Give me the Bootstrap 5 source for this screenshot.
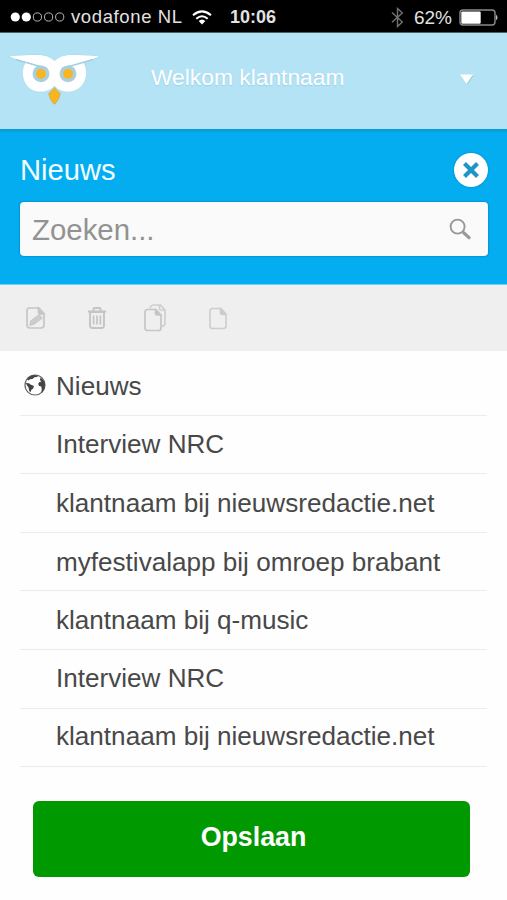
<!DOCTYPE html>
<html lang="nl">
<head>
<meta charset="utf-8">
<meta name="viewport" content="width=device-width, initial-scale=1">
<title>Nieuws</title>
<link href="https://cdn.jsdelivr.net/npm/bootstrap@5.3.0/dist/css/bootstrap.min.css" rel="stylesheet">
<style>
  body { font-family: "Liberation Sans", Arial, sans-serif; background: #fefefe; color: #484848; line-height: 1; overflow: hidden; }
  svg { display: block; flex: none; }
  .phone-status { height: 33px; background: #000; color: #e2e2e2; font-size: 18.5px; padding: 2px 9px 0 10px; border-bottom: 1px solid #4b6068; }
  .carrier { letter-spacing: .62px; margin-left: 6px; width: 121px; white-space: nowrap; padding-top: 1px; }
  .clock { font-size: 18px; font-weight: 700; margin-left: 18px; }
  .percent { font-size: 19px; margin: 0 7px 0 10px; }
  .brand-bar { height: 96px; background: #b3e3f5; color: #fff; padding: 0 33px 0 7px; }
  .welcome { font-size: 22.8px; text-shadow: 0 1px 1px rgba(90,150,175,.25); margin-left: 50px; padding-bottom: 8px; }
  .search-panel { height: 156px; background: linear-gradient(#0b98cc, #03adf0 4px); padding: 24px 19px 0 20px; border-bottom: 1px solid #74cdf3; }
  .panel-title { font-size: 29.2px; color: #f3fcff; padding-top: 1px; }
  .round-close { width: 34px; height: 34px; background: #fff; box-shadow: 0 0 2px rgba(0,80,120,.5); }
  .search-box { height: 54px; background: #fafafa; margin-top: 15px; border-radius: 4px; padding: 0 17px 0 12px; font-size: 29.4px; color: #929292; box-shadow: 0 0 2px rgba(0,70,110,.65); }
  .search-hint { padding-top: 2px; }
  .tool-strip { height: 66px; background: #efefef; padding: 0 25px; }
  .pages-icon { margin-left: 37px; }
  .trash-icon { margin-left: 41px; }
  .page-icon { margin-left: 42px; }
  .news { margin: 0 20px; padding-top: 6px; }
  .news-row { height: 58.6px; border-bottom: 1.5px solid #ececec; font-size: 26.1px; white-space: nowrap; }
  .news-row:nth-child(n+6) { padding-bottom: 2px; }
  .marker { width: 36px; padding-left: 4px; }
  .save { height: 76px; margin: 33.5px 37px 0 33px; background: #090; border-radius: 6px; font-size: 26.8px; color: #fff; border: 0; padding: 0 0 4px 4px; }
</style>
</head>
<body>
<div class="phone-status d-flex align-items-center">
  <svg width="55" height="12" viewBox="0 0 55 12"><g fill="#fff"><circle cx="5.3" cy="6" r="4.6"/><circle cx="16.3" cy="6" r="4.6"/></g><g fill="none" stroke="#b8b8b8" stroke-width="1"><circle cx="27.4" cy="6" r="4.1"/><circle cx="38.6" cy="6" r="4.1"/><circle cx="49.7" cy="6" r="4.1"/></g></svg>
  <span class="carrier">vodafone NL</span>
  <svg width="20" height="16" viewBox="0 0 20 16" fill="none" stroke="#fff" stroke-width="2.1"><path d="M1 6.2Q10-1.6 19 6.2M4.3 9.7Q10 4.8 15.7 9.7"/><path d="M6.7 12Q10 9 13.3 12L10 15.4Z" fill="#fff" stroke="none"/></svg>
  <span class="clock">10:06</span>
  <svg class="ms-auto" width="13" height="21" viewBox="0 0 13 21" fill="none" stroke="#727272" stroke-width="1.4"><path d="M1 5.5l10.3 9.4L6.5 19.5V1.5l4.8 4.4L1 15.2"/></svg>
  <span class="percent">62%</span>
  <svg width="39" height="17" viewBox="0 0 39 17"><rect x="1" y="1" width="35" height="15" rx="3" fill="none" stroke="#8b8b8b" stroke-width="1.4"/><rect x="2.3" y="2.4" width="19.4" height="12.3" rx="1.2" fill="#fff"/><path d="M37 5.5q3 3 0 6z" fill="#bbb"/></svg>
</div>

<header class="brand-bar d-flex align-items-center">
  <svg width="94" height="56" viewBox="0 0 94 56">
    <path d="M2 3.5C12 2.5 22 2 31 2Q41 2 47.500 8Q54 2 64 2C73 2 82 2.500 92.500 3.500L77 10Q79.500 14 79.500 20C79.500 31 71 39 61.500 39Q52 39 47.500 33Q43 39 33 39C23 39 15.500 31 15.500 20Q15.500 14 18 10Z" fill="#fff" stroke="#91becf" stroke-opacity=".4" stroke-width=".8"/>
    <circle cx="34" cy="20.8" r="8.500" fill="#a9cfdc"/><circle cx="61" cy="20.8" r="8.500" fill="#a9cfdc"/>
    <path d="M9 6.500L40 15.500M86 6.500L55 15.500" fill="none" stroke="#a3cfdf" stroke-width="1.700"/>
    <path d="M2 3.500C12 2.500 22 2 31 2Q41 2 47.500 8Q54 2 64 2C73 2 82 2.500 92.500 3.500L60 12.500Q53 14 50 18H45Q42 14 35 12.500Z" fill="#fff"/>
    <circle cx="34" cy="20.800" r="4.900" fill="#f8b51f"/><circle cx="61" cy="20.800" r="4.900" fill="#f8b51f"/>
    <path d="M47.500 34.500Q50.500 38.300 53.500 40.500Q52.200 47 48.100 51H46.900Q42.800 47 41.500 40.500Q44.500 38.300 47.500 34.500Z" fill="#f8b51f" stroke="#b4b17c" stroke-width=".7"/>
  </svg>
  <span class="welcome">Welkom klantnaam</span>
  <svg class="ms-auto mb-1" width="15" height="11" viewBox="0 0 15 11"><path d="M1.500 1.700h13L8 10.800z" fill="#8dbaca" opacity=".7"/><path d="M1 .5h13L7.500 10z" fill="#fff"/></svg>
</header>

<section class="search-panel">
  <div class="d-flex justify-content-between align-items-center">
    <span class="panel-title">Nieuws</span>
    <span class="round-close rounded-circle d-flex align-items-center justify-content-center">
      <svg width="18" height="18" viewBox="0 0 18 18"><path d="M2.500 2.500l13 13M15.500 2.500l-13 13" stroke="#2094c8" stroke-width="4.200"/></svg>
    </span>
  </div>
  <div class="search-box d-flex align-items-center justify-content-between">
    <span class="search-hint">Zoeken...</span>
    <svg width="22" height="22" viewBox="0 0 22 22" fill="none" stroke="#999"><circle cx="8.600" cy="8.600" r="7" stroke-width="1.900"/><path d="M13.500 13.500l2 2" stroke-width="2"/><path d="M15 15l5 4.700" stroke-width="3.200" stroke-linecap="round"/></svg>
  </div>
</section>

<nav class="tool-strip d-flex align-items-center">
  <svg width="21" height="24" viewBox="0 0 21 24" fill="none" stroke="#c6c6c6" stroke-width="1.700"><path d="M4 2h10l5 5.500V19q0 3-3 3H5q-3 0-3-3V5q0-3 2-3z"/><path d="M13.500 2.500v4q0 1.500 1.500 1.500h3.500z" fill="#c6c6c6"/><path d="M4.800 19.200l1-4.100 8.300-6.300 3 3.300-8.300 6.200z" fill="#d0d0d0" stroke-width="1.100"/><path d="M7 16.800l8-6M5.700 15l3.200 3.400" stroke-width=".9"/></svg>
  <svg class="trash-icon" width="20" height="24" viewBox="0 0 20 24" fill="none" stroke="#c4c4c4" stroke-width="1.900"><path d="M1 5.500h18M6.500 5V3q0-1 1-1h5q1 0 1 1v2"/><path d="M3 6v13.500q0 2.500 2.500 2.500h9q2.500 0 2.500-2.500V6z"/><path d="M6.600 9.500v9M10 9.500v9M13.400 9.500v9" stroke-width="1.700"/></svg>
  <svg class="pages-icon" width="23" height="28" viewBox="0 0 23 28" fill="none" stroke="#c6c6c6" stroke-width="1.700"><path d="M6 4q1-3 3.500-3H16.500l4.500 5v13q0 3-3 3.500M15.500 1v3.500Q15.500 6 17 6h4" stroke="#cfcfcf"/><path d="M3.500 5.500h8.500L17 11v13q0 2.500-2.500 2.500h-11Q1 26.500 1 24V8q0-2.500 2.500-2.500z"/><path d="M11.500 6v3.500Q11.500 11 13 11h3.500z" fill="#c2c2c2"/></svg>
  <svg class="page-icon" width="18" height="23" viewBox="0 0 18 23" fill="none" stroke="#cdcdcd" stroke-width="1.600"><path d="M3.500 1.500H12l5 5.500v12q0 2.500-2.500 2.500h-11Q1 21.500 1 19V4q0-2.500 2.500-2.500z"/><path d="M11.500 2v4q0 1.500 1.500 1.500h3.500z" fill="#cdcdcd"/></svg>
</nav>

<main>
  <div class="news">
    <div class="news-row d-flex align-items-center">
      <span class="marker"><svg width="23" height="23" viewBox="0 0 23 23"><circle cx="11" cy="11" r="10" fill="#fff" stroke="#666" stroke-width="1.200"/><path d="M3 5Q6 1.500 10.500 1l4 .7-1.500 1.300-2.500.2-2 1.800-2.500.2-1.500 1.300z" fill="#444"/><path d="M1.800 9l3.200.3 1.500 1.200 3.500 1.500-.8 2.500-2 1.400-.5 2.100-1.400-.8-.8-3.700L3 11.500z" fill="#444"/><path d="M16.500 3.500Q20.500 6 21 11q0 5-4 8l.8-3.500-.5-3-2.300-.4-.8-2.400 1.300-1.700 2-.3-1.500-1.500z" fill="#444"/></svg></span>
      <span>Nieuws</span>
    </div>
    <div class="news-row d-flex align-items-center"><span class="marker"></span><span>Interview NRC</span></div>
    <div class="news-row d-flex align-items-center"><span class="marker"></span><span>klantnaam bij nieuwsredactie.net</span></div>
    <div class="news-row d-flex align-items-center"><span class="marker"></span><span>myfestivalapp bij omroep brabant</span></div>
    <div class="news-row d-flex align-items-center"><span class="marker"></span><span>klantnaam bij q-music</span></div>
    <div class="news-row d-flex align-items-center"><span class="marker"></span><span>Interview NRC</span></div>
    <div class="news-row d-flex align-items-center"><span class="marker"></span><span>klantnaam bij nieuwsredactie.net</span></div>
  </div>
  <div class="d-grid"><button type="button" class="save btn fw-bold">Opslaan</button></div>
</main>
<script src="https://cdn.jsdelivr.net/npm/bootstrap@5.3.0/dist/js/bootstrap.bundle.min.js"></script>
</body>
</html>
